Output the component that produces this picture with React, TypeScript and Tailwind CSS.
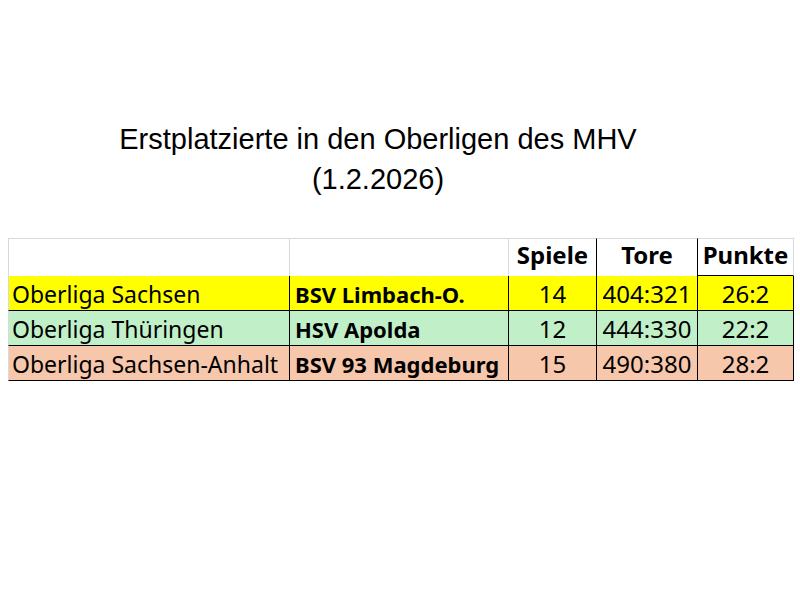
import React from 'react';

const rows = [
  { liga: 'Oberliga Sachsen', team: 'BSV Limbach-O.', spiele: '14', tore: '404:321', punkte: '26:2', bg: 'bg-[#ffff00]' },
  { liga: 'Oberliga Thüringen', team: 'HSV Apolda', spiele: '12', tore: '444:330', punkte: '22:2', bg: 'bg-[#c1f0c8]' },
  { liga: 'Oberliga Sachsen-Anhalt', team: 'BSV 93 Magdeburg', spiele: '15', tore: '490:380', punkte: '28:2', bg: 'bg-[#f7c7ac]' },
];

export default function App() {
  return (
    <div className="w-[800px] h-[600px] bg-white text-black">
      <div className="w-[756px] pt-[119px] text-center text-[29px] leading-[40px] font-['Liberation_Sans',Arial,sans-serif]">
        <div>Erstplatzierte in den Oberligen des MHV</div>
        <div>(1.2.2026)</div>
      </div>

      <div className="ml-[8px] mt-[39px] grid grid-cols-[282px_219px_88px_101px_96px] font-['Noto_Sans',sans-serif] leading-none">
        {/* header */}
        <div className="h-[38px] border-l border-t border-r border-[#d9d9d9]" />
        <div className="h-[38px] border-t border-r border-[#d9d9d9]" />
        <div className="h-[38px] border-t border-t-[#d9d9d9] border-r border-r-black flex items-end justify-center pb-[9px] text-[24px] font-bold">Spiele</div>
        <div className="h-[38px] border-t border-t-[#d9d9d9] border-r border-r-black flex items-end justify-center pb-[9px] text-[24px] font-bold">Tore</div>
        <div className="h-[38px] border-t border-t-[#d9d9d9] border-r border-r-[#d9d9d9] border-b border-b-black flex items-end justify-center pb-[8px] text-[24px] font-bold">Punkte</div>

        {rows.map((r) => (
          <React.Fragment key={r.liga}>
            <div className={`${r.bg} h-[35px] border-l border-l-[#d9d9d9] border-r border-r-black border-b border-b-black flex items-center pl-[3px] pt-[2px] text-[23px]`}>{r.liga}</div>
            <div className={`${r.bg} h-[35px] border-r border-b border-black flex items-center pl-[5px] pt-[2px] text-[22px] font-bold`}>{r.team}</div>
            <div className={`${r.bg} h-[35px] border-r border-b border-black flex items-center justify-center pt-[2px] text-[24px]`}>{r.spiele}</div>
            <div className={`${r.bg} h-[35px] border-r border-b border-black flex items-center justify-center pt-[2px] text-[24px]`}>{r.tore}</div>
            <div className={`${r.bg} h-[35px] border-r border-b border-black flex items-center justify-center pt-[2px] text-[24px]`}>{r.punkte}</div>
          </React.Fragment>
        ))}
      </div>
    </div>
  );
}
